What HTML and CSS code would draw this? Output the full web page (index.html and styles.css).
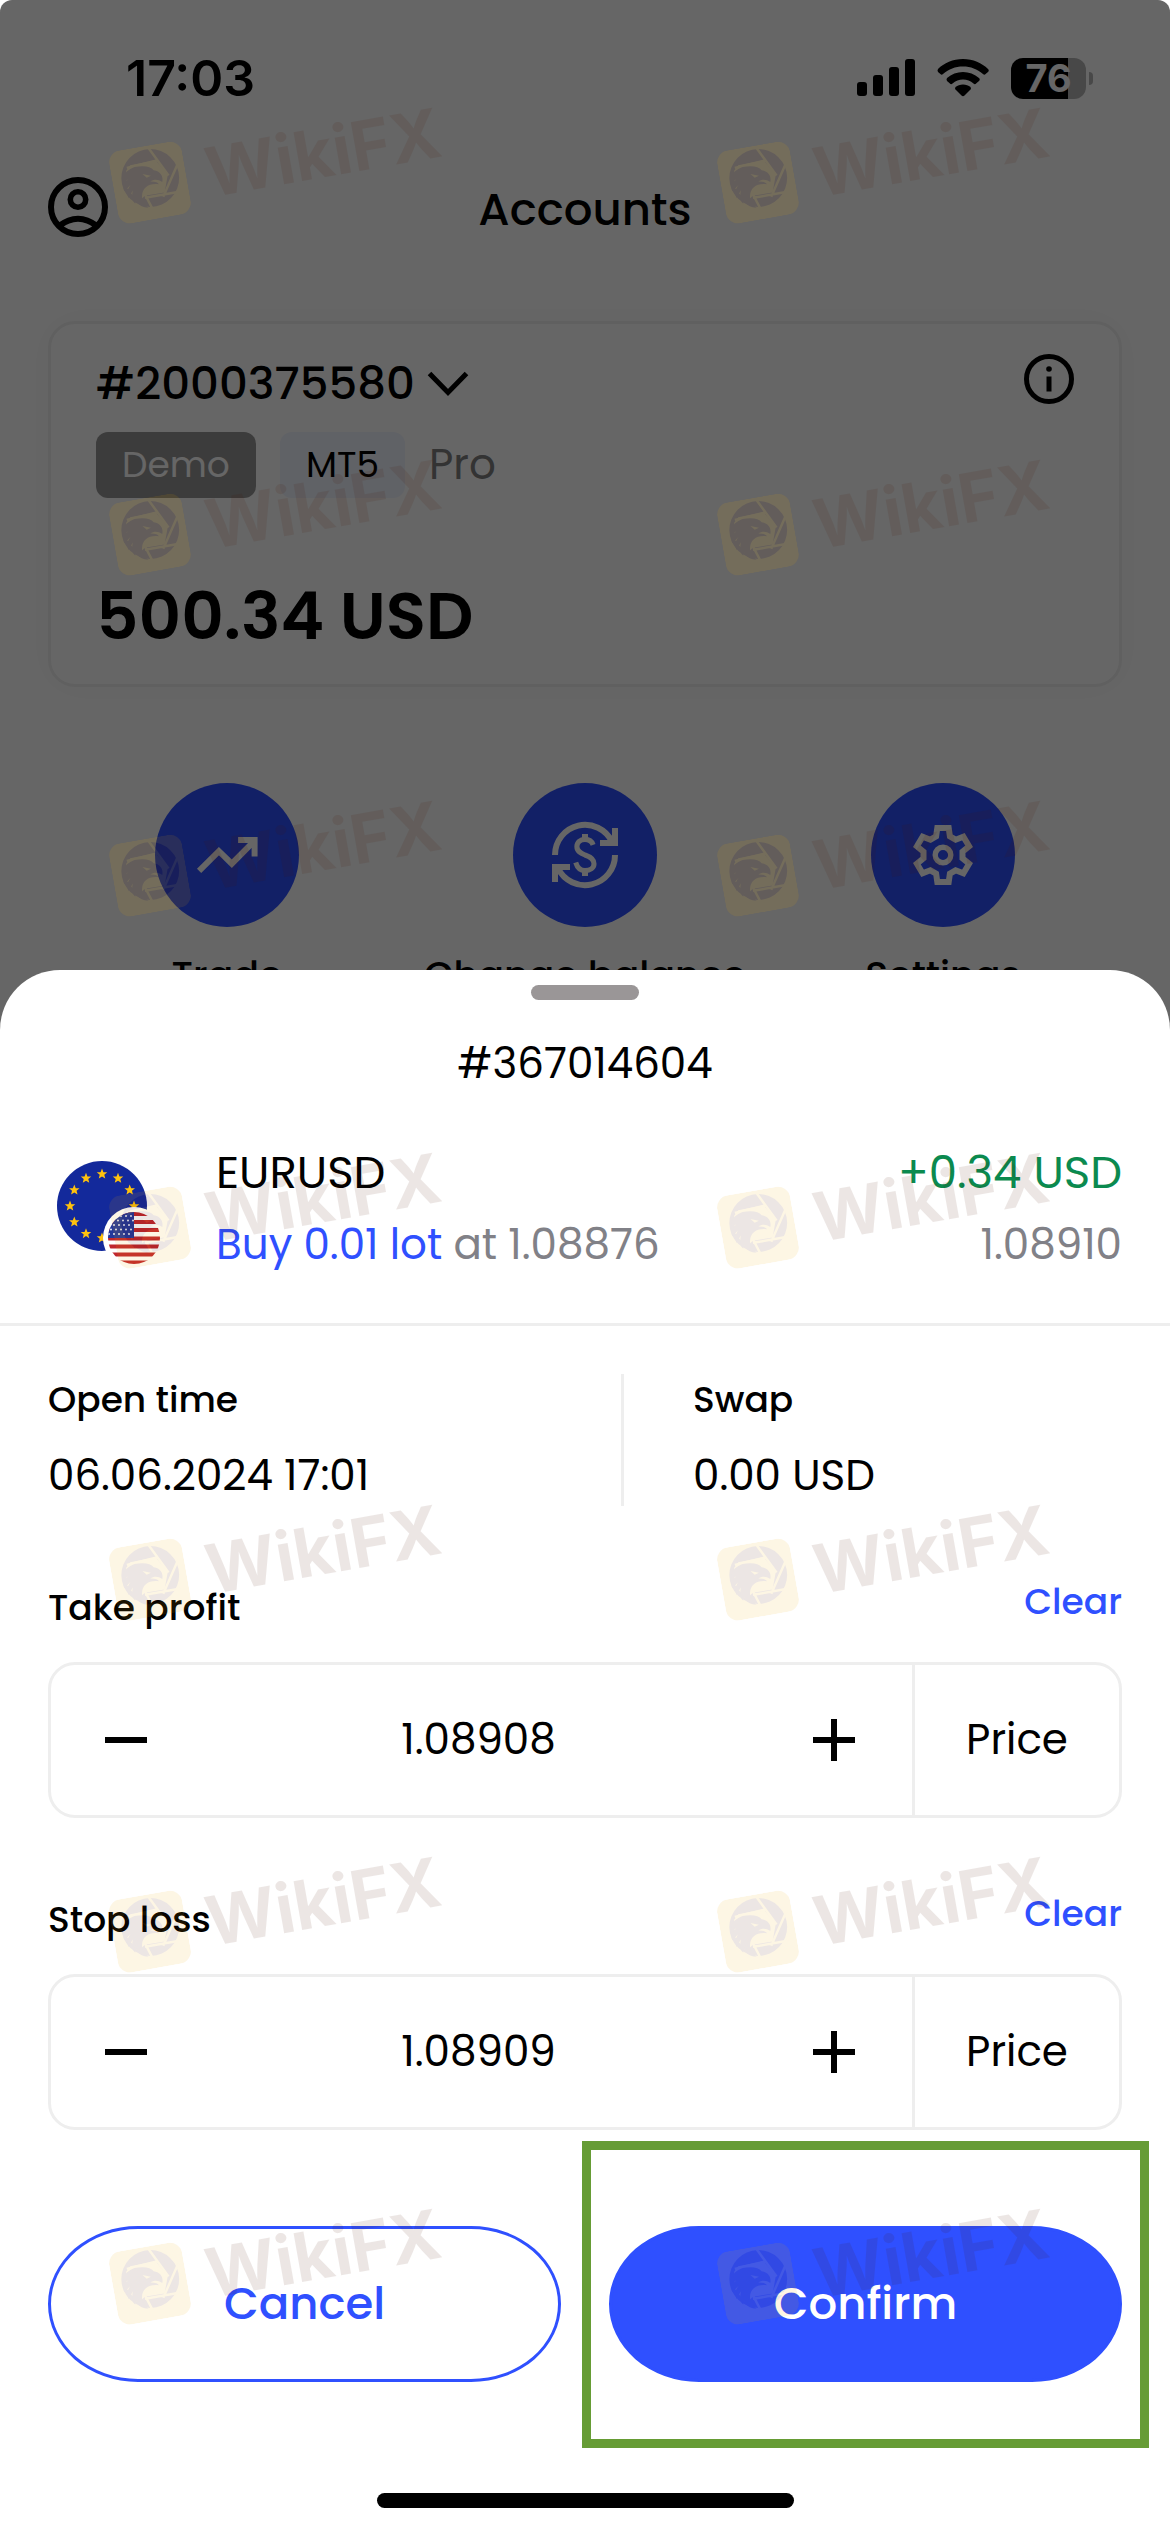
FILE: index.html
```html
<!DOCTYPE html>
<html lang="en">
<head>
<meta charset="utf-8">
<meta name="viewport" content="width=device-width, initial-scale=1">
<title>Accounts</title>
<link rel="stylesheet" href="styles.css">
</head>
<body>
<svg class="defs" aria-hidden="true">
  <symbol id="star" viewBox="-5 -5 10 10" overflow="visible">
    <polygon points="0,-4.6 1.2,-1.5 4.4,-1.4 1.9,.6 2.7,3.7 0,2 -2.7,3.7 -1.9,.6 -4.4,-1.4 -1.2,-1.5"/>
  </symbol>
  <symbol id="eagle" viewBox="0 0 70 70">
    <rect width="70" height="70" rx="12" fill="#f0aa00"/>
    <g transform="translate(35 35) rotate(9) scale(.3333) translate(-155 -275)">
      <circle cx="156" cy="262" r="82" fill="#4b1400"/>
      <path d="M88 240 100 225 172 212 206 254 196 304 140 312 120 330 90 290Z" fill="#f0aa00"/>
      <path d="M90 232 178 212M152 176 208 256M236 220 192 316M242 302 140 318M140 308 162 352" stroke="#f0aa00" stroke-width="7"/>
      <path d="M78 268C82 245 95 236 112 230 140 225 158 230 166 240 184 243 194 256 190 274 178 265 165 266 156 272 170 272 178 275 180 280 150 276 134 290 132 310 130 326 138 338 150 346 130 345 118 335 114 322L112 334C100 322 104 308 106 296L94 318C86 304 92 290 100 280L82 298C76 284 84 274 92 266Z" fill="#4b1400"/>
      <path d="M134 250 158 256 146 261Z" fill="#f0aa00"/>
    </g>
  </symbol>
</svg>

<div class="screen">
  <main class="app">
    <div class="status">
      <time class="clock">17:03</time>
      <div class="status-icons">
        <svg width="58" height="38" viewBox="0 0 58 38" aria-hidden="true">
          <rect x="0" y="23" width="10" height="14" rx="3"/><rect x="16" y="16" width="10" height="21" rx="3"/><rect x="32" y="8" width="10" height="29" rx="3"/><rect x="48" y="0" width="10" height="37" rx="3"/>
        </svg>
        <svg width="52" height="38" viewBox="0 0 52 38" aria-hidden="true">
          <path d="M26 0C36 0 45 4 51 10 52 11 52 12 51 13L48 15.500Q47 16 46 15C40 10 34 7.500 26 7.500S12 10 6 15Q5 16 4 15.500L1 13Q0 11.500 1 10C7 4 16 0 26 0Z"/>
          <path d="M26 13C32 13 37.500 15 42 19 43 20 43 21 42 22L38.500 25Q37.500 25.500 36.500 24.500C33.500 22 30 20.500 26 20.500S18.500 22 15.500 24.500Q14.500 25.500 13.500 25L10 22Q9 20.500 10 19C14.500 15 20 13 26 13Z"/>
          <path d="M26 25.500C29 25.500 31.500 26.500 33.500 28Q34.500 29.500 33.500 30.500L27.500 36.500Q26 38 24.500 36.500L18.500 30.500Q17.500 29.500 18.500 28C20.500 26.500 23 25.500 26 25.500Z"/>
        </svg>
        <div class="battery">76</div>
      </div>
    </div>

    <header class="topbar">
      <button class="icon-btn" aria-label="Profile">
        <svg width="60" height="60" viewBox="0 0 60 60" fill="none" stroke="#000" stroke-width="6">
          <circle cx="30" cy="30" r="27"/><circle cx="30" cy="22.500" r="7.700" stroke-width="5.600"/><path d="M11 49Q30 34.500 49 49"/>
        </svg>
      </button>
      <h1>Accounts</h1>
      <span></span>
    </header>

    <section class="card">
      <div class="card-head">
        <button class="account">#2000375580
          <svg width="42" height="26" viewBox="0 0 42 26" fill="none" stroke="#000" stroke-width="5"><path d="M2.500 2.500 21 21.500 39.500 2.500"/></svg>
        </button>
        <button class="icon-btn" aria-label="Account details">
          <svg width="50" height="50" viewBox="0 0 50 50"><circle cx="25" cy="25" r="22.500" fill="none" stroke="#000" stroke-width="5"/><circle cx="25" cy="15" r="2.800"/><rect x="22.500" y="22.500" width="5" height="15"/></svg>
        </button>
      </div>
      <div class="tags"><span class="tag tag-demo">Demo</span><span class="tag tag-platform">MT5</span><span class="plan">Pro</span></div>
      <p class="balance">500.34 USD</p>
    </section>

    <nav class="actions">
      <a class="action" href="#trade">
        <span class="disc"><svg width="72" height="72" viewBox="0 0 24 24" fill="none" stroke="#fff" stroke-width="2"><path d="M2.700 17.300 9.300 10.700 13.600 14.900 21.200 7.200M15.700 7H21.200V12.500"/></svg></span>
        Trade
      </a>
      <a class="action" href="#balance">
        <span class="disc"><svg width="72" height="72" viewBox="-12 -12 24 24" fill="none" stroke="#fff" stroke-width="2">
          <path d="M-10 0A10 10 0 0 1 9 -4.400M10 0A10 10 0 0 1 -9 4.400M10 -9V-4H5M-10 9V4H-5"/>
          <path stroke-width="1.700" d="M2.700 -3.400C2.200 -4.800 1.100 -5.200 0 -5.200-1.600 -5.200-2.700 -4.200-2.700 -2.800-2.700 -1.200-1.500 -.6 0 0 1.700 .6 3 1.300 3 2.900 3 4.300 1.700 5.200 0 5.200-1.600 5.200-2.600 4.100-3.100 2.500"/>
          <path d="M0 -7V-5.200M0 5.200V7"/></svg></span>
        Change balance
      </a>
      <a class="action" href="#settings">
        <span class="disc"><svg width="72" height="72" viewBox="-12 -12 24 24" fill="none" stroke="#fff" stroke-width="2">
          <path d="M-2.300-6.200-1.900-9H1.900L2.300-6.200 4.200-5.100 6.800-6.100 8.700-2.900 6.500-1.100V1.100L8.700 2.900 6.800 6.100 4.200 5.100 2.300 6.200 1.900 9H-1.900L-2.300 6.200-4.200 5.100-6.800 6.100-8.700 2.900-6.500 1.100V-1.100L-8.700-2.900-6.800-6.100-4.200-5.100Z"/><circle r="2.600" stroke-width="1.800"/></svg></span>
        Settings
      </a>
    </nav>
  </main>

  <div class="backdrop"></div>

  <section class="sheet" role="dialog" aria-labelledby="order-id">
    <div class="grabber"></div>
    <h2 id="order-id">#367014604</h2>

    <div class="position">
      <svg width="120" height="120" viewBox="0 0 120 120" role="img" aria-label="EUR USD">
        <circle cx="54" cy="57" r="45" fill="#13299b"/>
        <g fill="#ffc20e" transform="translate(48 51)">
          <use href="#star" width="12" height="12" x="0" y="-32"/><use href="#star" width="12" height="12" x="16" y="-27.700"/><use href="#star" width="12" height="12" x="27.700" y="-16"/><use href="#star" width="12" height="12" x="32" y="0"/><use href="#star" width="12" height="12" x="0" y="32"/><use href="#star" width="12" height="12" x="-16" y="27.700"/><use href="#star" width="12" height="12" x="-27.700" y="16"/><use href="#star" width="12" height="12" x="-32" y="0"/><use href="#star" width="12" height="12" x="-27.700" y="-16"/><use href="#star" width="12" height="12" x="-16" y="-27.700"/>
        </g>
        <circle cx="86" cy="89" r="31" fill="#fff"/>
        <clipPath id="us-clip"><circle cx="86" cy="89" r="26"/></clipPath>
        <g clip-path="url(#us-clip)">
          <rect x="60" y="63" width="52" height="52" fill="#fff"/>
          <path d="M60 65H112M60 73H112M60 81H112M60 89.500H112M60 97.500H112M60 105.500H112M60 113.500H112" stroke="#c0272d" stroke-width="4.200"/>
          <rect x="60" y="63" width="26" height="26" fill="#24389b"/>
          <path d="M63 67H86M65 71.500H86M61 76H86M63 80.500H86M61 85H86" stroke="#fff" stroke-width="1.800" stroke-linecap="round" stroke-dasharray="0 5"/>
        </g>
      </svg>
      <div class="position-main">
        <span class="symbol">EURUSD</span>
        <span class="muted"><span class="side">Buy 0.01 lot</span> at 1.08876</span>
      </div>
      <div class="position-result">
        <span class="gain">+0.34 USD</span>
        <span class="muted">1.08910</span>
      </div>
    </div>

    <dl class="facts">
      <div><dt>Open time</dt><dd>06.06.2024 17:01</dd></div>
      <div><dt>Swap</dt><dd>0.00 USD</dd></div>
    </dl>

    <div class="limit">
      <div class="limit-head"><label for="tp">Take profit</label><button class="clear">Clear</button></div>
      <div class="stepper">
        <button class="step" aria-label="Decrease"><svg width="42" height="42" viewBox="0 0 42 42"><rect y="18" width="42" height="6"/></svg></button>
        <input id="tp" type="text" inputmode="decimal" value="1.08908">
        <button class="step step-up" aria-label="Increase"><svg width="42" height="42" viewBox="0 0 42 42"><rect y="18" width="42" height="6"/><rect x="18" width="6" height="42"/></svg></button>
        <button class="unit">Price</button>
      </div>
    </div>

    <div class="limit">
      <div class="limit-head"><label for="sl">Stop loss</label><button class="clear">Clear</button></div>
      <div class="stepper">
        <button class="step" aria-label="Decrease"><svg width="42" height="42" viewBox="0 0 42 42"><rect y="18" width="42" height="6"/></svg></button>
        <input id="sl" type="text" inputmode="decimal" value="1.08909">
        <button class="step step-up" aria-label="Increase"><svg width="42" height="42" viewBox="0 0 42 42"><rect y="18" width="42" height="6"/><rect x="18" width="6" height="42"/></svg></button>
        <button class="unit">Price</button>
      </div>
    </div>

    <div class="buttons">
      <button class="btn btn-cancel">Cancel</button>
      <div class="highlight"><button class="btn btn-confirm">Confirm</button></div>
    </div>
    <div class="home"></div>
  </section>

  <div class="marks" aria-hidden="true">
    <div class="marks-group">
      <div class="mark"><svg><use href="#eagle"/></svg>WikiFX</div><div class="mark"><svg><use href="#eagle"/></svg>WikiFX</div>
      <div class="mark"><svg><use href="#eagle"/></svg>WikiFX</div><div class="mark"><svg><use href="#eagle"/></svg>WikiFX</div>
    </div>
    <div class="marks-group">
      <div class="mark"><svg><use href="#eagle"/></svg>WikiFX</div><div class="mark"><svg><use href="#eagle"/></svg>WikiFX</div>
      <div class="mark"><svg><use href="#eagle"/></svg>WikiFX</div><div class="mark"><svg><use href="#eagle"/></svg>WikiFX</div>
      <div class="mark"><svg><use href="#eagle"/></svg>WikiFX</div><div class="mark"><svg><use href="#eagle"/></svg>WikiFX</div>
      <div class="mark"><svg><use href="#eagle"/></svg>WikiFX</div><div class="mark"><svg><use href="#eagle"/></svg>WikiFX</div>
      <div class="mark"><svg><use href="#eagle"/></svg>WikiFX</div><div class="mark"><svg><use href="#eagle"/></svg>WikiFX</div>
    </div>
  </div>
</div>
</body>
</html>
```
FILE: styles.css
```css
:root {
  --blue: #2f50ff;
  --line: #eeeeee;
  --muted: #818187;
}

* { box-sizing: border-box; }

body {
  margin: 0;
  background: #fff;
  color: #000;
  font: 400 42px/60px Poppins, Inter, sans-serif;
}

h1, h2, p, dl, dd { margin: 0; }

h1, h2 { font-size: inherit; font-weight: inherit; }

button, input {
  margin: 0;
  padding: 0;
  border: 0;
  background: none;
  color: inherit;
  font: inherit;
}

svg { display: block; flex: none; }

.defs { position: absolute; width: 0; height: 0; }

/* The account page, its dimmer and the sheet share one grid cell. */
.screen {
  position: relative;
  display: grid;
  min-height: 100vh;
}

.app, .backdrop, .sheet { grid-area: 1 / 1; min-width: 0; }

.app { padding: 0 48px; }

.backdrop {
  z-index: 1;
  border-radius: 12px 12px 0 0;
  background: rgba(0, 0, 0, .6);
}

/* Status bar */
.status {
  display: flex;
  align-items: center;
  justify-content: space-between;
  height: 156px;
  padding: 0 29px 0 78px;
}

.clock { font: 600 50px/60px Inter, sans-serif; }

.status-icons { display: flex; align-items: center; gap: 22px; }

.battery {
  position: relative;
  width: 75px;
  height: 41px;
  margin-right: 7px;
  border-radius: 12px;
  background: linear-gradient(90deg, #000 76%, #b4b4b4 76%);
  color: #fff;
  font: 700 38px/41px Inter, sans-serif;
  text-align: center;
}

.battery::after {
  content: "";
  position: absolute;
  top: 14px;
  right: -7px;
  width: 4px;
  height: 13px;
  border-radius: 0 6px 6px 0;
  background: #b4b4b4;
}

/* Page header */
.topbar {
  display: grid;
  grid-template-columns: 60px 1fr 60px;
  align-items: end;
  height: 102px;
  padding-bottom: 21px;
  text-align: center;
}

h1 { font-size: 45px; font-weight: 500; line-height: 54px; }

/* Account card */
.card {
  margin-top: 63px;
  padding: 30px 45px 26px;
  border: 3px solid #f0f0f0;
  border-radius: 27px;
  box-shadow: 0 0 36px rgba(0, 0, 0, .03);
}

.card-head {
  display: flex;
  align-items: flex-start;
  justify-content: space-between;
}

.account {
  display: flex;
  align-items: center;
  gap: 12px;
  font-size: 45px;
  font-weight: 500;
}

.tags { display: flex; align-items: center; gap: 24px; margin-top: 18px; }

.tag {
  padding: 0 26px;
  border-radius: 12px;
  font-size: 36px;
  line-height: 66px;
}

.tag-demo { background: #969696; color: #fff; }

.tag-platform { background: #f0f4ff; }

.plan { color: #808080; }

.balance {
  margin-top: 76px;
  font-size: 66px;
  font-weight: 600;
  line-height: 84px;
}

/* Shortcuts */
.actions {
  display: grid;
  grid-template-columns: repeat(3, 1fr);
  margin-top: 96px;
}

.action {
  display: flex;
  flex-direction: column;
  align-items: center;
  gap: 24px;
  color: #000;
  font-size: 38px;
  font-weight: 500;
  line-height: 48px;
  text-decoration: none;
}

.disc {
  display: grid;
  place-items: center;
  width: 144px;
  height: 144px;
  border-radius: 50%;
  background: var(--blue);
}

/* Order sheet */
.sheet {
  z-index: 2;
  align-self: end;
  padding: 15px 0 24px;
  border-radius: 60px 60px 0 0;
  background: #fff;
}

.grabber, .home {
  height: 15px;
  margin: 0 auto;
  border-radius: 8px;
}

.grabber { width: 108px; background: #9a9697; }

.sheet h2 { margin: 34px 0 43px; text-align: center; }

.position {
  display: flex;
  align-items: center;
  gap: 48px;
  padding: 0 48px 42px;
  border-bottom: 3px solid var(--line);
  line-height: 72px;
}

.position-main, .position-result { display: flex; flex-direction: column; }

.position-result { margin-left: auto; text-align: right; }

.symbol, .gain { font-size: 45px; }

.muted { color: var(--muted); }

.side { color: var(--blue); }

.gain { color: #0b8a4f; }

.facts {
  display: grid;
  grid-template-columns: 576fr 498fr;
  margin: 48px 48px 0;
}

.facts > div + div { padding-left: 69px; }

.facts > div:first-child { border-right: 3px solid var(--line); }

.facts dt {
  margin-bottom: 20px;
  font-size: 36px;
  font-weight: 500;
  line-height: 52px;
}

.limit { margin: 78px 48px 0; }

.limit-head {
  display: flex;
  align-items: flex-start;
  justify-content: space-between;
  margin-bottom: 30px;
  font-size: 36px;
  font-weight: 500;
  line-height: 48px;
}

.clear { color: var(--blue); line-height: 36px; }

.stepper {
  display: flex;
  height: 156px;
  border: 3px solid var(--line);
  border-radius: 27px;
}

.step {
  display: grid;
  flex: none;
  place-items: center;
  width: 150px;
}

.step-up { width: 156px; }

.stepper input {
  flex: 1;
  min-width: 0;
  text-align: center;
}

.unit {
  flex: none;
  width: 207px;
  border-left: 3px solid var(--line);
}

.buttons {
  display: grid;
  grid-template-columns: 1fr 1fr;
  gap: 48px;
  margin: 96px 48px 111px;
}

.btn {
  width: 100%;
  height: 156px;
  border: 3px solid var(--blue);
  border-radius: 90px / 78px;
  font-size: 45px;
  font-weight: 500;
}

.btn-cancel { color: var(--blue); }

.btn-confirm { background: var(--blue); color: #fff; }

.highlight { position: relative; }

.highlight::after {
  content: "";
  position: absolute;
  inset: -85px -27px -66px;
  border: 9px solid #669c35;
  pointer-events: none;
}

.home { width: 417px; background: #000; }

/* Tiled watermark laid over the whole screen */
.marks {
  position: absolute;
  inset: 0;
  z-index: 3;
  overflow: hidden;
  padding: 123px 0 0 111px;
  pointer-events: none;
}

.marks-group {
  display: grid;
  grid-template-columns: 608px 334px;
  grid-auto-rows: 352px;
}

.marks-group + .marks-group { margin-top: -11px; }

.mark {
  display: flex;
  align-items: center;
  gap: 20px;
  width: 334px;
  height: 74px;
  color: #4b1400;
  font: 700 68px/74px Inter, sans-serif;
  opacity: .1;
  transform: rotate(-10deg);
}

.mark svg { width: 74px; height: 74px; }
```
